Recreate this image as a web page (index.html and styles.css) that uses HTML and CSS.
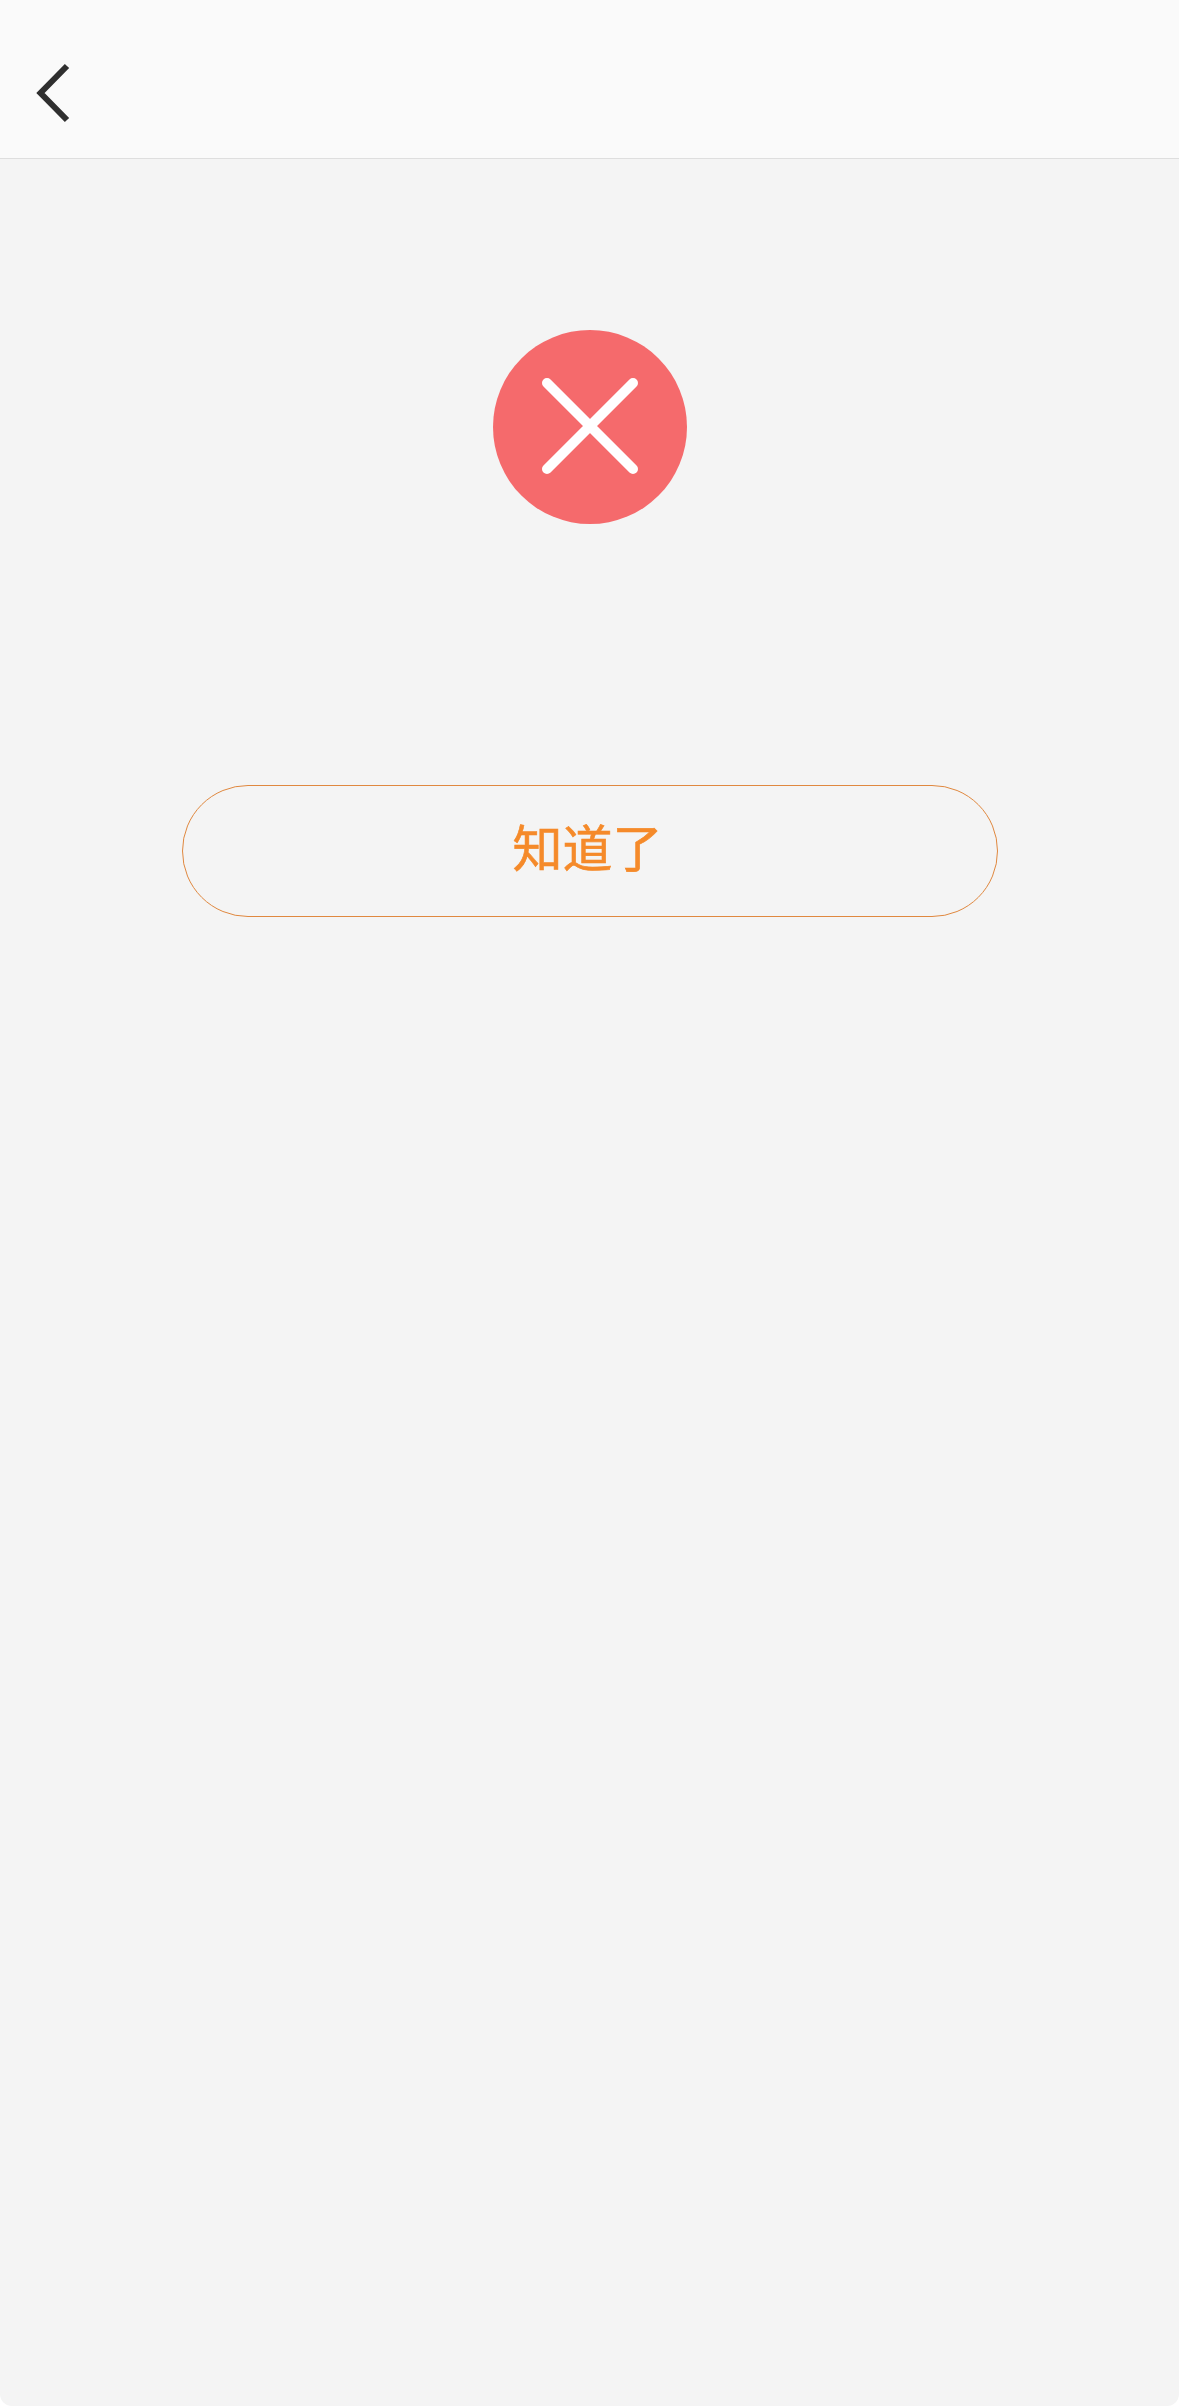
FILE: index.html
```html
<!DOCTYPE html>
<html lang="zh-CN">
<head>
    <meta charset="UTF-8">
    <meta name="viewport" content="width=device-width, initial-scale=1.0">
    <title>知道了</title>
    <link rel="stylesheet" href="styles.css">
</head>
<body>
    <div class="page">
        <header class="top-bar">
            <svg class="back-icon" width="40" height="64" viewBox="0 0 40 64">
                <path d="M31 5 L4.5 32 L31 59" fill="none" stroke="#2f2f2f" stroke-width="6"/>
            </svg>
        </header>
        <section class="result">
            <div class="fail-icon">
                <svg width="100" height="100" viewBox="0 1 100 100">
                    <path d="M7 7 L93 93 M93 7 L7 93" fill="none" stroke="#fff" stroke-width="10" stroke-linecap="round"/>
                </svg>
            </div>
            <button class="ok-btn" type="button">知道了</button>
        </section>
    </div>
</body>
</html>
```

FILE: styles.css
```css
html, body {
  margin: 0;
  padding: 0;
  background-color: #ffffff;
}

.page {
  width: 1179px;
  height: 2406px;
  background-color: #f4f4f4;
  border-radius: 0 0 12px 12px;
  overflow: hidden;
  font-family: "Noto Sans CJK SC", "Liberation Sans", sans-serif;
}

.top-bar {
  height: 159px;
  box-sizing: border-box;
  padding: 61px 0 0 36px;
  background-color: #fafafa;
  border-bottom: 1px solid #dedede;
}

.back-icon {
  display: block;
}

.result {
  display: flex;
  flex-direction: column;
  align-items: center;
  padding-top: 171px;
}

.fail-icon {
  display: flex;
  align-items: center;
  justify-content: center;
  width: 194px;
  height: 194px;
  border-radius: 50%;
  background-color: #f56a6c;
}

.fail-icon svg {
  display: block;
}

.ok-btn {
  width: 816px;
  height: 132px;
  margin-top: 261px;
  padding: 0 4px 12px 0;
  border: 1px solid #e0883f;
  border-radius: 66px;
  background-color: transparent;
  color: #f58a2a;
  font-family: inherit;
  font-size: 50px;
  -webkit-text-stroke: 0.6px #f58a2a;
}
```
